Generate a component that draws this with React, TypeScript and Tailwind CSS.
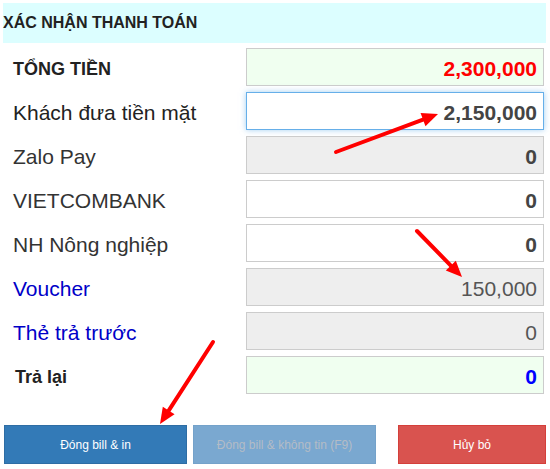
import React from "react";

type Row = {
  label: string;
  labelCls: string;
  value: string;
  boxCls: string;
  valueCls: string;
};

const rows: Row[] = [
  { label: "TỔNG TIỀN", labelCls: "font-bold text-[18px] text-[#222] pl-[13px] pt-[4px]", value: "2,300,000", boxCls: "bg-[#f0fff0] border-[#ccc]", valueCls: "font-bold text-[#ff0000]" },
  { label: "Khách đưa tiền mặt", labelCls: "text-[21px] text-[#222] pl-[13px] pt-[3px]", value: "2,150,000", boxCls: "bg-white border-[#66afe9] shadow-[0_0_6px_rgba(102,175,233,0.6)]", valueCls: "font-bold text-[#444]" },
  { label: "Zalo Pay", labelCls: "text-[21px] text-[#333] pl-[13px] pt-[3px]", value: "0", boxCls: "bg-[#eeeeee] border-[#ccc]", valueCls: "font-bold text-[#444]" },
  { label: "VIETCOMBANK", labelCls: "text-[21px] text-[#333] pl-[13px] pt-[3px]", value: "0", boxCls: "bg-white border-[#ccc]", valueCls: "font-bold text-[#444]" },
  { label: "NH Nông nghiệp", labelCls: "text-[21px] text-[#333] pl-[13px] pt-[3px]", value: "0", boxCls: "bg-white border-[#ccc]", valueCls: "font-bold text-[#444]" },
  { label: "Voucher", labelCls: "text-[21px] text-[#0000c8] pl-[13px] pt-[3px]", value: "150,000", boxCls: "bg-[#eeeeee] border-[#ccc]", valueCls: "text-[#555]" },
  { label: "Thẻ trả trước", labelCls: "text-[21px] text-[#0000c8] pl-[13px] pt-[3px]", value: "0", boxCls: "bg-[#eeeeee] border-[#ccc]", valueCls: "text-[#555]" },
  { label: "Trả lại", labelCls: "font-bold text-[18px] text-[#222] pl-[15px] pt-[3px]", value: "0", boxCls: "bg-[#f0fff0] border-[#ccc]", valueCls: "font-bold text-[#0000ff]" },
];

function Arrow({ x1, y1, x2, y2 }: { x1: number; y1: number; x2: number; y2: number }) {
  const ang = Math.atan2(y2 - y1, x2 - x1);
  const len = 16;
  const w = 7;
  const bx = x2 - len * Math.cos(ang);
  const by = y2 - len * Math.sin(ang);
  const px = -Math.sin(ang) * w;
  const py = Math.cos(ang) * w;
  return (
    <g>
      <line x1={x1} y1={y1} x2={bx} y2={by} stroke="#ff0000" strokeWidth={4} strokeLinecap="round" />
      <polygon points={`${x2},${y2} ${bx + px},${by + py} ${bx - px},${by - py}`} fill="#ff0000" />
    </g>
  );
}

export default function App() {
  return (
    <div className="relative w-[550px] h-[469px] bg-white font-['Liberation_Sans',Arial,sans-serif] overflow-hidden">
      <div className="mx-[3px] mt-[3px] w-[543px] h-[40px] bg-[#dcfeff] flex items-center text-[16px] font-bold text-[#222]">
        XÁC NHẬN THANH TOÁN
      </div>
      <div className="flex flex-col gap-[6px] mt-[5px]">
        {rows.map((r) => (
          <div key={r.label} className="flex items-center h-[38px]">
            <div className={`w-[246px] leading-[30px] ${r.labelCls}`}>{r.label}</div>
            <div className={`w-[298px] h-[38px] border flex items-center justify-end pr-[6px] pt-[3px] text-[21px] leading-[30px] ${r.boxCls}`}>
              <span className={r.valueCls}>{r.value}</span>
            </div>
          </div>
        ))}
      </div>
      <div className="flex mt-[31px] pl-[4px] h-[39px] text-[12px]">
        <div className="w-[183px] h-full bg-[#337ab7] border border-[#2e6da4] text-white flex items-center justify-center">
          Đóng bill &amp; in
        </div>
        <div className="w-[183px] ml-[6px] h-full bg-[#7aa8d0] border border-[#74a2ca] text-[#b4bcc6] flex items-center justify-center">
          Đóng bill &amp; không tin (F9)
        </div>
        <div className="w-[148px] ml-[22px] h-full bg-[#d9534f] border border-[#d43f3a] text-white flex items-center justify-center">
          Hủy bỏ
        </div>
      </div>
      <svg className="absolute left-0 top-0 pointer-events-none" width={550} height={469}>
        <Arrow x1={336} y1={152} x2={438} y2={114} />
        <Arrow x1={417} y1={231} x2={462} y2={277} />
        <Arrow x1={213} y1={342} x2={160} y2={424} />
      </svg>
    </div>
  );
}
